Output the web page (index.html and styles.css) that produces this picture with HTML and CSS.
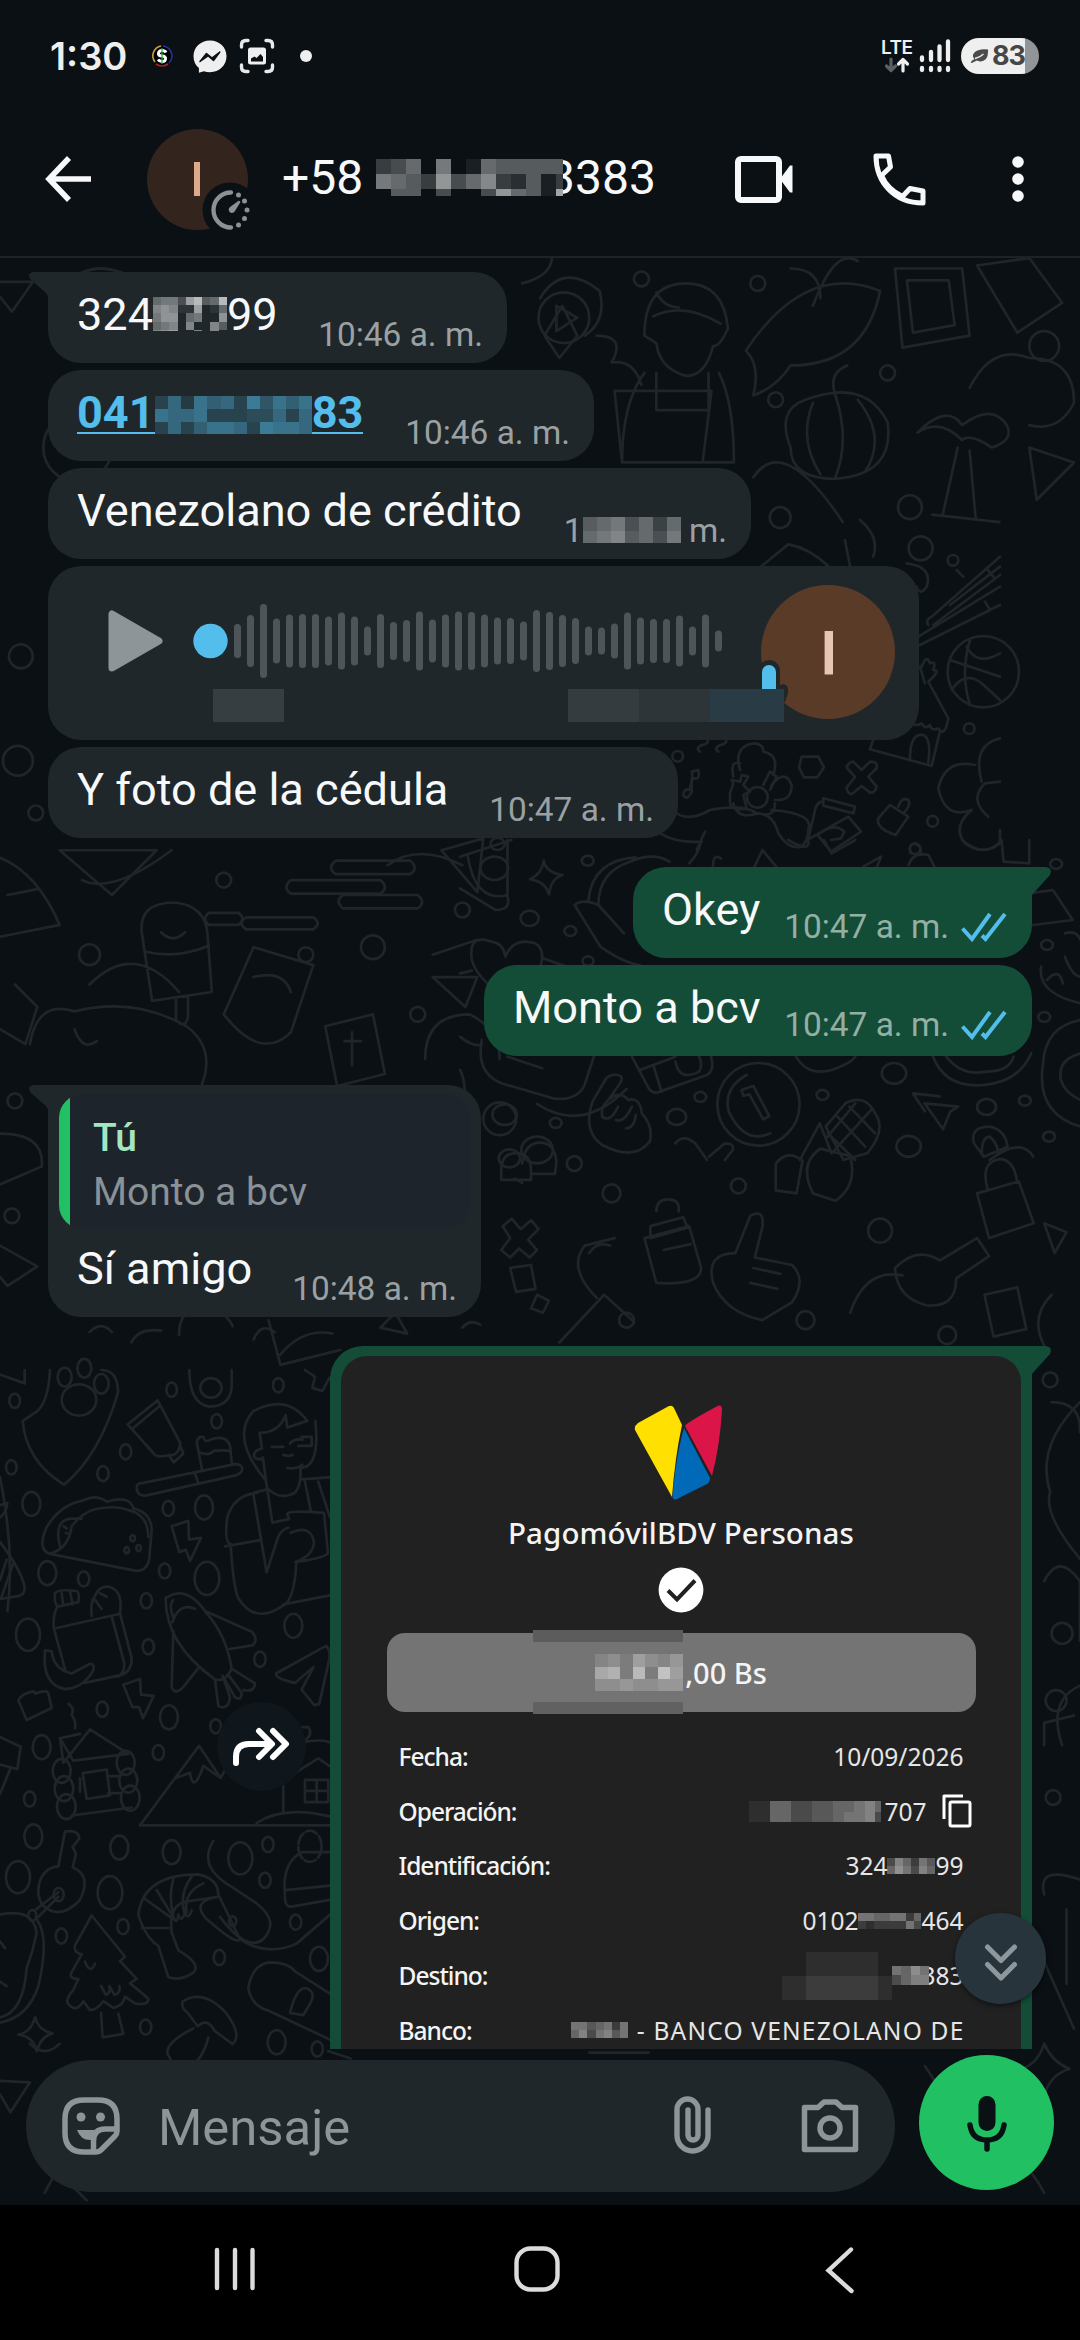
FILE: index.html
```html
<!DOCTYPE html>
<html lang="es">
<head>
<meta charset="utf-8">
<title>Chat</title>
<link rel="stylesheet" href="styles.css">
</head>
<body>
<div class="screen">
  <header class="top">
    <div class="status">
      <span class="clock">1:30</span>
      <svg class="st-coin" width="24" height="24" viewBox="0 0 24 24"><circle cx="12" cy="12" r="9" fill="#000"/><g fill="none" stroke-width="1.6"><path d="M5 18A10 10 0 0 1 11 2" stroke="#c9a03c"/><path d="M13 2A10 10 0 0 1 19 19" stroke="#2a2f9a"/><path d="M18 20A10 10 0 0 1 6 20" stroke="#b02328"/></g><path d="M16 8.500Q15 6.500 12 6.500T8.500 9.200 12 12 15.500 15 12 17.500 8 15.500" fill="none" stroke="#fff" stroke-width="3"/><path d="M12 4v16" stroke="#35a04b" stroke-width="1.300"/></svg>
      <svg class="st-msgr" width="34" height="34" viewBox="0 0 34 34"><path d="M17 .5C7.500.5.5 7.300.5 16.300c0 4.900 2 8.900 5.400 11.700v4.800l5-1.600c2 .7 4 1 6.100 1C26.500 32.200 33.500 25.300 33.500 16.300S26.500.5 17 .5z" fill="#efefef"/><path d="M7 21.500l6.500-8 5.500 4.500 7.800-6-6.300 8.500-5.500-4.700z" fill="#0a1014" stroke="#0a1014" stroke-width="1.500" stroke-linejoin="round"/></svg>
      <svg class="st-shot" width="36" height="36" viewBox="0 0 36 36"><g fill="none" stroke="#e8e8e8" stroke-width="3.400" stroke-linecap="round"><path d="M2.500 9V7q0-4.500 4.500-4.500h2M27 2.500h2q4.500 0 4.500 4.500v2M33.500 27v2q0 4.500-4.500 4.500h-2M9 33.500H7q-4.500 0-4.500-4.500v-2"/></g><rect x="9" y="9.500" width="18" height="17" rx="2.500" fill="#efefef"/><path d="M12 23.500v-3l3.500-2 2 1.500 4-4 2.500 3v4.500z" fill="#0a1014"/></svg>
      <i class="st-dot"></i>
      <span class="grow"></span>
      <span class="net"><b>LTE</b><svg width="28" height="16" viewBox="0 0 28 16" fill="none" stroke-width="3.200" stroke-linecap="round" stroke-linejoin="round"><path d="M7 2v11M2.500 9L7 13.500 11.500 9" stroke="#5b6063"/><path d="M19 14V3M14.500 7L19 2.500 23.500 7" stroke="#efefef"/></svg></span>
      <svg class="signal" width="32" height="34" viewBox="0 0 32 34" stroke="#efefef" stroke-width="4.300" stroke-linecap="round"><path d="M3 18.500V21M12 13v8M20.500 7.500V21M29 2.500V21M3 29v2M12 29v2M20.500 29v2M29 29v2"/></svg>
      <span class="battery"><svg width="19" height="15" viewBox="0 0 19 15"><path d="M18 .5Q8-.5 4 4 1.500 7.500 4.500 10 1 12 .8 13.300q.6 1.500 2.500 0L7 11.500q5 2.500 9-1.500 2.500-3 2-9.500z" fill="#4a4b4c"/><path d="M5 9.500Q10 8.500 13.500 5" stroke="#efefef" stroke-width="1.300" fill="none"/></svg><b>83</b></span>
    </div>
    <div class="bar">
      <svg class="back" width="46" height="46" viewBox="0 0 46 46" fill="none" stroke="#f7f8fa" stroke-width="5.600"><path d="M24 2L4 23l20 21M4 23h42"/></svg>
      <div class="avatar"><i></i><svg class="timer" width="56" height="56" viewBox="0 0 56 56"><circle cx="28" cy="28" r="27.500" fill="#0a1014"/><path d="M29 10.500a17.500 17.500 0 1 0 0 35" fill="none" stroke="#8b9296" stroke-width="4.300" stroke-linecap="round"/><g fill="#8b9296"><circle cx="36.500" cy="13" r="2.500"/><circle cx="42.500" cy="19" r="2.500"/><circle cx="45" cy="28" r="2.500"/><circle cx="42.500" cy="36.500" r="2.500"/><circle cx="36.500" cy="43" r="2.500"/><path d="M37 18.500l1.500 1.500-5.500 9a3.300 3.300 0 1 1-5-4z"/></g></svg></div>
      <div class="phone"><span>+58</span><span class="mosaic m-head" data-cell="15" data-rows="3460701655555|7653946832513|055040049651a"></span><span class="tail-num">3383</span></div>
      <svg class="video" width="60" height="48" viewBox="0 0 60 48"><rect x="4" y="4" width="41" height="41" rx="3" fill="none" stroke="#f7f8fa" stroke-width="6"/><path d="M46 24L56 10.500h2.500v27H56z" fill="#f7f8fa"/></svg>
      <svg class="call" width="54" height="54" viewBox="0 0 54 54" fill="none" stroke="#f7f8fa" stroke-width="5" stroke-linejoin="round"><path d="M4 4h12.500l2 11-9 8.500C13.500 33 21 40 30.500 44.500L38 36.500l13 2.500v12C22 51 4 30 4 4z"/></svg>
      <svg class="dots" width="14" height="48" viewBox="0 0 14 48" fill="#f7f8fa"><circle cx="7" cy="7" r="5.800"/><circle cx="7" cy="24" r="5.800"/><circle cx="7" cy="41" r="5.800"/></svg>
    </div>
  </header>

  <main class="body">
    <svg class="wall" width="1080" height="1947" viewBox="0 258 1080 1947">
      <g transform="translate(0 1370) scale(.3333 .4464)">
        <path d="M0 10l74 20V0M150 0q-5 70-38 92l-44 22q10 90 124 143Q300 190 354 50q0-50-50-50"/>
        <ellipse cx="237" cy="67" rx="52" ry="35"/><circle cx="194" cy="16" r="21"/><circle cx="253" cy="-4" r="21"/><circle cx="304" cy="31" r="22"/>
        <path d="M383 122l90-54 68 96q-5 30-35 27-25 5-40 0zM400 130l80-50M506 190l15 17 29-20-9-17M410 265q-2-12 20-12l275-42q20 0 22 10 0 10-20 15L440 281q-28 2-30-16zM585 232l10 22M606 222l-16-60q5-15 20-12 5 15 25 5 45-10 55 15l6 42M596 184q30 10 45-3 30-2 50 0"/>
        <path d="M795 245Q690 150 760 92q100-40 162 22l-60 15-5-28q-20 40-78 40l7 35q-30 5-22 20 15 8 25 0l12 68q40 30 85 10 20-20 15-55 60 0 45-105M815 172h35M870 165q10-12 38-9M905 150h30v20h-40M850 190q15 5 28 0M862 220q30 2 45-8M905 245l90-5"/>
        <path d="M762 275l40-8 15 75 50-8-5-12q0-8 110-2l12 90q-5 10-95 20-5 90-45 100-80 40-130-20-15-30-22-120-20-3-10-60 20-50 90-55M675 395l106-14M760 278l40 175 35-80q10-15 30-20M872 365q60-20 70 20 0 30-55 45M915 250l18 68M955 250l35 80M850 525l140-20"/>
        <path d="M150 412q-40-10-10-60 40-50 110-60 40-15 70 3 70-15 80 15 55 10 55 50l-6 50q0 40-40 40zM155 410q50-10 60-60 30-30 70-38 60-10 100 2 60 10 60 60M180 395q-20-60 35-62h30M190 350l10 5M198 365l12 3"/><circle cx="398" cy="377" r="7"/><circle cx="380" cy="404" r="7"/><circle cx="416" cy="399" r="7"/>
        <path d="M515 350l50-12 2 42 36-4-33 52-12-25-20 5zM0 385q70 70 74 105 0 15-25 17L0 513M0 470l20-45M5 508l35-75M0 330q20-10 22-32L0 303"/>
        <path d="M165 500q10-10 65-5 10 5 5 25l-62 10q-12-10-8-30zM185 500l5 28M210 495l8 30M172 530q-15 20-10 50l33 90M170 578l190-32q10-50-30-60-30-5-45 20-15 15-10 45M360 545l35 100q0 30-30 38l-110 18M335 552l38 105q0 25-20 30M135 628l20 2q5 40 60 50l55-22q15 0 10 15-30 40-85 42-70-10-60-87zM285 515l20 20M300 500l20 8"/>
        <path d="M500 510q60-30 120 35 60 50 75 125-20 30-50 23-150-80-148-183zM517 565q20-45 68-30M520 555q-15-30 0-40M622 542l135 45q20 20 0 30l-68 8M520 585l-5 125q10 20 35 0l45-42M645 693l10 60q30 10 35-20l-22-48M670 688l35 45q20 10 20-10l-40-40M697 670l68 32q0 20-35 15"/>
        <path d="M828 680l150-62q15 10 10 30l-30 100-15 3-38-35 35-50-55 35q-60-10-57-21zM370 705l50-13 3 35 38 3-32 50-12-25h-20zM55 740q10-15 45-20 10 5 5 5 40-10 40 0l10 32-75 27zM205 748q20 10 10 25 15 15 10 30M180 825l60-10M180 825l10 55 80-75 115 55-165 15zM248 903l72-8 10 58-70 8zM240 915v30M325 910h30M325 948h35M215 998l180-18"/>
        <circle cx="185" cy="898" r="27"/><circle cx="192" cy="938" r="28"/><circle cx="199" cy="978" r="28"/><circle cx="377" cy="880" r="27"/><circle cx="385" cy="920" r="27"/><circle cx="391" cy="959" r="28"/>
        <path d="M0 822l62 22-10 50L0 884M30 895L0 950M420 1020h570M420 1020l177-178 65 72 90-120 60 60M528 914l42-12q10 50 40-15l52 27M850 920v70M770 1015q80-40 220-15M845 800h80q15 15-10 30l-130 75q-10 20 20 25l75-25 75-35 35 18M915 918h70v50h-70zM915 943h70M950 918v50M900 835q70-10 90 0"/>
        <path d="M175 1112l20-78q40-5 43 15l-20 20 10 15-10 30q60 20 20 75-60 45-110 10-20-20-10-50 15-35 57-37zM105 1210l70-40M115 1225l60-45"/><circle cx="176" cy="1175" r="15"/><circle cx="97" cy="1222" r="12"/>
        <path d="M0 1220q100-15 110 40-10 40-30 80-10 100-80 110M110 1230q40 40 5 150-30 70-115 82M0 1280l15 15M0 1370l20 10M275 1222l100 92-15 10 50 40-20 10q50 30 55 35 0 15-40 10l-30-15q-5 20-35 25l-30-15q-20 20-40 20l-20-20q-20 25-40 10-20-10 10-35l15-25q-30 0-20-15l30-40q-25-5-20-20zM303 1440l5 55 62-8-15-45M255 1325q15 30 30 5M303 1380l15 20q15-5 10-20l15 20q20-5 15-20"/>
        <path d="M415 1220q15-90 180-90 60 10 60 45l65 100q-10 15-100-45-50-40 35-50l-90 10q-60 5-50 70l20 40q70 30 45 50-40 20-75 10l-30-70q-40-20-60-70zM435 1185l75 40M425 1250h80M470 1165l45 55M520 1140q-15 40 0 80M575 1135q-40 40-20 85M610 1150q-60 20-50 65M520 1225q10 20 15-5 10 20 20-5 10 20 20-5M640 1055q-50 60 60 105l70 35q70 40 20 80-50 30-130-50"/>
        <circle cx="698" cy="1235" r="11"/><path d="M720 1275q80 40 170 10l100-65M548 1415q60-30 130 25 50 50 20 70l-55-30q-20-30-50-10l-30-30q-20-10-15-25zM625 1495q-15 50-65 72M580 1475q-80 30-78 55l20 30M745 1385q10-50 60-58 60 0 80 20l105 50M745 1385q10 40 60 50l185 65M870 1440q20-60 50-55 30 10 10 35l-20 25zM855 1175q-10-70 50-95h85M855 1165l135-10M855 1180q0 25 20 22l115-15"/><circle cx="930" cy="1067" r="35" stroke-dasharray="12 3"/>
        <path d="M105 1450q10 30 53 36-35 6-48 40-10-33-55-37 38-5 50-39z"/>
        <g class="bub"><circle cx="44" cy="69" r="16"/><circle cx="34" cy="218" r="16"/><circle cx="377" cy="183" r="17"/><circle cx="309" cy="232" r="17"/><circle cx="94" cy="300" r="27"/><circle cx="515" cy="44" r="16"/><circle cx="650" cy="115" r="16"/><circle cx="835" cy="34" r="16"/><circle cx="505" cy="310" r="17"/><circle cx="612" cy="308" r="27"/><circle cx="142" cy="455" r="27"/><circle cx="251" cy="468" r="17"/><circle cx="494" cy="450" r="17"/><circle cx="621" cy="467" r="37"/><circle cx="439" cy="517" r="17"/><circle cx="84" cy="593" r="36"/><circle cx="445" cy="620" r="17"/><circle cx="880" cy="573" r="27"/><circle cx="780" cy="648" r="17"/><circle cx="507" cy="778" r="27"/><circle cx="307" cy="760" r="17"/><circle cx="125" cy="845" r="27"/><circle cx="475" cy="857" r="17"/><circle cx="89" cy="961" r="17"/><circle cx="647" cy="798" r="16"/><circle cx="100" cy="1045" r="27"/><circle cx="358" cy="1070" r="27"/><circle cx="515" cy="1080" r="27"/><circle cx="721" cy="1094" r="36"/><circle cx="54" cy="1136" r="36"/><circle cx="330" cy="1171" r="37"/><circle cx="369" cy="1247" r="17"/><circle cx="184" cy="1268" r="17"/><circle cx="658" cy="1316" r="17"/><circle cx="437" cy="1472" r="17"/><circle cx="830" cy="1506" r="27"/><circle cx="957" cy="1319" r="27"/><circle cx="887" cy="1237" r="17"/><circle cx="804" cy="1063" r="17"/><circle cx="795" cy="1143" r="17"/><circle cx="952" cy="1521" r="17"/></g>
        <ellipse cx="633" cy="40" rx="32" ry="22"/><path d="M568 0q0 75 60 82 60 0 67-42V0M915 0l30 15-8 25 30 7 22-30"/>
      </g>
      <g transform="translate(460 840) scale(.3953 .3333)">
        <path d="M212 62q5 35 48 43-30 10-35 58-10-40-48-45 30-15 35-56zM0 50L130 0M120 0v170q10 40-30 40L0 145M20 50q20 140 100 115M610 0q-5 40-30 70M290 195q20-20 60 0 0-100 80-130 60-30 100 0M325 180q10-120 120-128M290 195l65 125q60 50 100 55M350 195l65 85M30 360q-10-80 50-55 30 5 35 45 20-60 75-40 30 20 10 80l-90 80q-70-60-80-110zM210 355l60 25M0 400l30-8M0 590q30 30 55 25M0 690q10 20 12 60"/>
        <path d="M55 600q-15 100 50 130l130 45q60 10 80-40l25-90M120 650l88 35M435 650l40 90q10 25 30 15l120-50q20-15 10-55M455 690l90-40M490 680l20 75M545 665q10 60 60 30 10-20 0-45"/>
        <ellipse cx="755" cy="793" rx="104" ry="124"/><path d="M725 705q-60 40-45 110 40 100 105 65M712 750l30-12 40 90-15 10-35-75-15 5z"/>
        <path d="M400 705q15 5 5 25l-30 50q30-30 50 0 30-10 35 40 30 40 20 85-40 60-120 10-50-40-25-130l35-70q15-15 30-10zM375 780q-20 20-15 50 20 20 40-30M395 840q20 10 40-40M420 865q20 0 25-40M545 910q20-30 50 0l30 50M630 950l40-40q25 0 20 20l-20 30M860 960l50-110 30 90M925 860l50-70q50-30 75 30 30 50-20 120l-60 20zM930 880l70 80M955 830l70 90M985 800l65 80M1040 810l-100 130M1000 790l-70 100"/>
        <path d="M1175 790l85 10-20 15-18 53zM1300 910q-10-50 40-50 40 10 45 60l-60 30zM1320 940q0-50 20-50 20 20 20 45M1340 960q80-70 110-10M1570 540q-90 20-95 130-20 150 95 190M1570 640q-60 20-50 80 10 40 50 60M1195 645q30 100 130 90 90-10 120-95M1230 650q40 60 100 45 60 0 70-45M850 650q30 60 90 40 50-20 60-40M1440 160l60-10 50 90-100 15M1530 350q20 60 40 60M1470 380q-10 80 100 110M1530 280q30-10 40 20M1485 420q30-40 40 10M745 80l20-50 35 50M1135 75q10-40 50-30l15 35M1140 40q-5-30 10-28 20 5 15 30M1270 0q60 60 100 0l5 65 65 5V0M1020 80l45-30-10 30M640 80q0-40 20-25M830 0q60 40 50 0M920 0l20 40 60-40"/>
        <g class="bub"><circle cx="87" cy="85" r="35"/><circle cx="323" cy="62" r="15"/><circle cx="176" cy="235" r="23"/><circle cx="279" cy="273" r="15"/><circle cx="324" cy="363" r="14"/><circle cx="113" cy="824" r="31"/><circle cx="242" cy="849" r="15"/><circle cx="608" cy="771" r="15"/><circle cx="548" cy="831" r="24"/><circle cx="917" cy="765" r="15"/><circle cx="1098" cy="700" r="31"/><circle cx="1332" cy="801" r="24"/><circle cx="1429" cy="782" r="15"/><circle cx="1490" cy="890" r="15"/><circle cx="1135" cy="919" r="31"/><circle cx="1478" cy="531" r="15"/><circle cx="1485" cy="315" r="15"/><circle cx="1508" cy="72" r="15"/><circle cx="195" cy="930" r="40"/><circle cx="125" cy="955" r="27"/><circle cx="95" cy="12" r="18"/></g>
      </g>
      <g transform="translate(500 550) scale(.3333)">
        <path d="M785 48l80-65q60 10 120 65M1050 48L1035-30M1120 20q20-60-40-110M1220 40q80 10 60 70-20 30-30 0M1285 225q-10-15 10-25L1500 20M1300 225L1500 75M1350 165L1500 50M1260 285L1500 165M1255 260L1500 110M1370 60l20 20M1460 55l20 25M1455 155l15 25"/>
        <circle cx="1450" cy="365" r="107"/><path d="M1350 330l150 50M1410 270q-30 100 0 195M1400 290q30 60 100 20M1355 420q40-60 90-20l55 50"/>
        <path d="M1260 350l15 50M1265 350q15-40 25-10 20-10 10 20 25 0-15 35M1285 395l60 110q-10 60-30 30-20 10-25-10-15 15-25-5-15 10-30 0M1110 598l185 50 25-105M1110 598l10-30M1230 628q0-80 40-73 25 10 15 85"/>
        <path d="M720 660q-20-70 40-80 30 0 30 25 50 10 30 70M700 680q-10-50 20-40M690 730l10-30-5-10 25 5 5-20 20 5-15 25 20 20-20 10 10 40q-50 10-50-20 0-20 0-25zM790 705l20-40 20 15-20 40M815 705q40-50 60 0 0 50-50 45M700 760q10 50 75 30 50 15 50-30M530 790q40 25 100-10 100-20 140 10 50 0 65 60 30 50 70 40 20-20 20-50 20-50-110-60M480 850q50 30 125 25M615 845l-25 55"/><circle cx="772" cy="742" r="31"/>
        <path d="M905 620h50l17 32-20 30h-40l-15-30zM1040 650q10-15 20-15l25 25 25-25q25 0 20 20l-25 25 25 30q-5 20-20 18l-25-20-30 25q-15-5-15-20l25-32-22-25zM970 745l95 25-5 20-90-23zM968 755q-20 0-25 35l-20 85M930 865l115-65 38 45-90 60-40-50q50-40 80-10l-10 20-30 5M1135 805l35-40 55 35-38 55q-60-20-52-50zM1195 770q10-30 30-20 10 15-15 40M1445 695q-30-110 55-130M1415 780q-80 30-100-65 20-90 110-70M1465 800q-60-50-10-100l45-5M1415 780q-60 50-20 100 50 40 105 0v-40"/>
        <path d="M570 715q10-40 5-50l20-5q5 30-10 25l-10 5v35q-15 30-25 10 0-20 20-15M600 605q-15-10 5-20 20 0 20-20M655 605q-15-10 5-20 20 0 20-20"/>
        <g class="bub"><circle cx="533" cy="619" r="16"/><circle cx="1359" cy="31" r="16"/><circle cx="1408" cy="536" r="16"/><circle cx="1298" cy="814" r="16"/><circle cx="1245" cy="896" r="16"/><circle cx="1262" cy="-5" r="36"/></g>
      </g>
      <g transform="scale(1.4917)">
        <path d="M0 189l22 0-14 20-8-10M45 190q20-20 50 0M350 190q20-5 20-18M365 225l12-20 10 20-12 15zM362 200q15-25 40-5 5 20-10 30M400 225q20 0 10 18 15-2 20 15M440 196q5 10 15 10M432 225q0-35 28-35 25 0 28 30-5 12-10 12-5 20-18 20-18-5-20-22zM438 212q20-10 45 5M432 250q-15 20-15 60h75q0-40-10-60M440 250v25h35v-25M412 262h65l-6 48h-54zM500 235q40-60 90-40-10 50-60 50-10 15-25 20 5-20-5-30zM545 205q15-40 30-30M530 180q20 0 20 20M600 180h45l5 45-45 8zM608 188h28l4 30-28 5zM655 178l35-5 22 30-30 20zM530 300q-10-25 10-32 40-15 55 15 5 35-35 38-30 0-30-21zM545 270q-10 25 5 48M560 265q10 30 0 55M575 268q20 25 5 48M560 265q-5-15 8-20M615 290q20-20 30-5 20-15 30 0 5 10-10 15-15-10-20-5-15-15-30-5zM642 300l-10 45M650 302l4 45M625 345l45 5M505 320q20-30 60 30M420 320l-5 30M650 260q15-30 40-20 30 0 30 30-10 20-30 15M690 300l30 10-25 25z"/>
        <circle cx="378" cy="213" r="17"/><path d="M373 205l14 8-14 9z"/>
        <path d="M0 575q25 10 40 45L0 628M5 600l20-4M40 570h65l-30 30zM55 590q20 10 60-20M95 625q-2-20 22-20 20 2 22 20l3 40-40 6zM98 638q20 5 42-4M108 625q8 8 16 0M118 670v14q6 6 8-2v-14M150 680l20-45 40 12-15 45q-20 20-45-12zM165 615h45q6 4 0 8h-45q-6-4 0-8zM195 590h60q6 5 0 9h-60q-6-4 0-9zM140 612h20q5 4 0 8h-20q-5-4 0-8zM225 577h50q6 5 0 9h-50q-6-4 0-9zM230 600h50q6 5 0 9h-50q-6-5 0-9zM296 570l28-8-4 36zM290 640l30-10M290 655h30l-8 20zM218 688l32-8 8 40-32 8zM236 692v22M231 698h11M20 700q5-30 30-22 40-10 75 10 20 15 10 40M50 690q5 15 15 8M285 710q0-30 30-30 20 10 20 30M60 660q30-30 60 5M260 580q20-15 50 0M170 655q20-5 25 10M10 660l15 15-8 25L0 690"/>
        <path d="M337 822l6-5 6 7 7-6 5 6-7 7 6 7-5 5-7-6-6 6-6-5 6-8zM336 785q0-12 10-12t10 12v6h-20zM350 780q2-14 12-14t11 13l-1 8h-15M342 850l14-2 3 16-13 2zM360 868l8 4-4 8-8-3zM432 830l30-8 8 28q0 12-30 10zM436 822l22-6 3 7-25 7zM440 812q0-8 8-8t7 8M445 838l18-4M478 860q-5-20 15-20l10-25q10-5 8 8l-5 20 25 5q10 10 0 25l-20 12q-25-5-33-25zM505 850l18 4M503 860l18 4M545 800q-10-20 5-30l20 5q5 20-10 30zM600 850q15-15 30-5l25-15 8 12-22 15q0 20-20 18-20-5-21-25zM655 800l28-8 10 28-30 10zM662 797q-5-18 8-20 10 0 12 16M700 820l15 6-8 14zM570 880q10-30 35-25M400 870q-20-20-8-35l20-5M375 900l30-32 20 18M395 840q5-8 14-5M660 868l22-5 6 28-22 5zM360 740q30 20 60-10M620 745l-8-12 18 2M520 780q8-10 18-2l-4 22-14-2zM705 868q-15 15-5 34M345 790l5 3"/>
        <path d="M705 940q20 0 19 20M724 940q-30 30-20 60-5 15 20 45M700 1060q10-20 24 0v40M712 1170q-10-30 12-40M700 1270q-5-20 24-10M700 1170v-15l20-5M715 1280v50M700 1315l20 45M0 760q30 0 28 22l-28 12M0 835l25 14L5 862 0 856M0 990q10 50 5 90"/>
        <g class="bub"><circle cx="52" cy="300" r="23"/><circle cx="508" cy="190" r="5"/><circle cx="430" cy="187" r="5"/><circle cx="595" cy="250" r="5"/><circle cx="520" cy="268" r="5"/><circle cx="610" cy="340" r="8"/><circle cx="523" cy="347" r="7"/><circle cx="700" cy="232" r="10"/><circle cx="14" cy="440" r="8"/><circle cx="12" cy="510" r="10"/><circle cx="24" cy="545" r="5"/><circle cx="150" cy="590" r="5"/><circle cx="205" cy="640" r="5"/><circle cx="250" cy="635" r="8"/><circle cx="310" cy="610" r="5"/><circle cx="60" cy="640" r="7"/><circle cx="280" cy="680" r="5"/><circle cx="335" cy="750" r="11"/><circle cx="420" cy="885" r="5"/><circle cx="540" cy="885" r="6"/><circle cx="590" cy="825" r="8"/><circle cx="704" cy="925" r="5"/><circle cx="712" cy="1095" r="7"/><circle cx="708" cy="1140" r="7"/><circle cx="706" cy="1205" r="5"/><circle cx="8" cy="815" r="5"/><circle cx="10" cy="738" r="5"/><circle cx="410" cy="800" r="6"/><circle cx="495" cy="795" r="5"/><circle cx="635" cy="895" r="6"/><circle cx="385" cy="780" r="5"/></g>
        <path d="M20 1370q10 10 20 0M700 1370q5 12 17 17-12 3-17 17-4-12-15-17 11-4 15-17zM670 1440q20 10 30 30M30 1470l8-15 20 20M0 1395l20 1-13 20-7-12M620 1385l20 30M600 1480h30M220 1375l15 5M395 1376h40"/>
        <path d="M120 895q0-18 16-18 14 0 20 12M88 900q5-10 20-8M180 885l8 30 40-10M188 908q15-18 35-14M170 898q5-12 14-5M60 893q8-8 15 0M255 890l10-10 8 14zM310 890q5-6 12-2"/>
      </g>
    </svg>

    <section class="chat">
      <div class="msg in tail w459"><span class="txt">324</span><span class="mosaic m-id" data-cell="8.2" data-rows="56639b45b|787119015|688056008|567070074|789007070"></span><span class="txt">99</span><time>10:46 a. m.</time></div>
      <div class="msg in w546"><span class="txt link">041</span><span class="mosaic m-tel" data-tint="#53bdeb" data-cell="13.100" data-rows="372867395868|877833344737|373688739887"></span><span class="txt link">83</span><time>10:46 a. m.</time></div>
      <div class="msg in w703"><span class="txt">Venezolano de crédito</span><time class="part">1<span class="mosaic m-time" data-cell="14" data-rows="4563525|5674536"></span> m.</time></div>
      <div class="msg in voice">
        <svg class="play" width="55" height="62" viewBox="0 0 55 62"><path d="M4 4v54l47-27z" fill="#8d9598" stroke="#8d9598" stroke-width="7" stroke-linejoin="round"/></svg>
        <div class="track">
          <svg width="530" height="76" viewBox="0 0 530 76"><path stroke="#4d5558" stroke-width="7" stroke-linecap="round" d="M44.500 24.500v27M57.500 15.500v45M70.500 4.500v67M83.500 19v38M96.500 15v46M109.500 14.500v47M122.500 14.500v47M135.500 17v42M148.500 13v50M161.500 17v42M174.500 27v22M187.500 14.500v47M200.500 22.500v31M213.500 20.500v35M226.500 12v52M239.500 20v36M252.500 15v46M265.500 12v52M278.500 12.500v51M291.500 15v46M304.500 18v40M317.500 18.500v39M330.500 22v32M343.500 10.500v55M356.500 12.500v51M369.500 15.500v45M382.500 18.500v39M395.500 27v22M408.500 28v20M421.500 24v28M434.500 13v50M447.500 18v40M460.500 19.500v37M473.500 19.500v37M486.500 16v44M499.500 27v22M512.500 15v46M525.500 31v14"/><circle cx="17.500" cy="38" r="17.200" fill="#53bdeb"/></svg>
          <div class="under"><i class="b1"></i><i class="b2"></i><i class="b3"></i><i class="b4"></i></div>
        </div>
        <div class="vavatar"><svg width="134" height="134" viewBox="0 0 134 134"><circle cx="67" cy="67" r="67" fill="#5a3b28"/><path d="M67.800 46v43.500" stroke="#e7c6b3" stroke-width="8.400"/></svg><svg class="vmic" width="40" height="58" viewBox="0 0 40 58"><path d="M2 30V13a11 11 0 0 1 22 0v14q9-3 8 8l-3 9H2z" fill="#1f272a"/><path d="M6 31V14a7 7 0 0 1 14 0v17z" fill="#53bdeb"/></svg></div>
      </div>
      <div class="msg in w630"><span class="txt">Y foto de la cédula</span><time>10:47 a. m.</time></div>
      <div class="msg out tail w399 first-out"><span class="txt">Okey</span><time>10:47 a. m.</time><svg class="ticks" width="46" height="30" viewBox="0 0 46 30" fill="none" stroke="#53bdeb" stroke-width="4"><path d="M1.500 16.500L11 27 29 2M21 23.500l3.500 3.500L44 2"/></svg></div>
      <div class="msg out w548"><span class="txt">Monto a bcv</span><time>10:47 a. m.</time><svg class="ticks" width="46" height="30" viewBox="0 0 46 30" fill="none" stroke="#53bdeb" stroke-width="4"><path d="M1.500 16.500L11 27 29 2M21 23.500l3.500 3.500L44 2"/></svg></div>
      <div class="reply in tail">
        <div class="quote"><strong>Tú</strong><span>Monto a bcv</span></div>
        <div class="line"><span class="txt">Sí amigo</span><time>10:48 a. m.</time></div>
      </div>
      <div class="photo-row">
        <div class="forward"><svg width="58" height="42" viewBox="0 0 58 42" fill="none" stroke="#fff" stroke-width="6" stroke-linecap="round" stroke-linejoin="round"><path d="M4 37v-6Q4 18 17 18h21M27 5l13 13-13 13M41 5l13 13-13 13"/></svg></div>
        <div class="photo out tail"><div class="receipt">
          <svg class="bdv" width="92" height="96" viewBox="0 0 92 96"><path d="M1 25Q0 21 4 18L34 1.500Q38-.5 40 3l8 17Q41 52 38 92z" fill="#ffe000"/><path d="M50 23L76 73Q76 77 73 79L42 94.500Q38.500 95 38.500 91 42 50 50 23z" fill="#0069b8"/><path d="M51 21Q52 18 84 .8 88-.5 88 5 86 40 78 71z" fill="#dc1548"/></svg>
          <h2>PagomóvilBDV Personas</h2>
          <svg class="ok" width="46" height="46" viewBox="0 0 46 46"><circle cx="23" cy="23" r="22.400" fill="#fff"/><path d="M10 23.500l9 9L37 13.500" fill="none" stroke="#212121" stroke-width="4"/></svg>
          <div class="amount"><i class="cover top-c"></i><i class="cover bot-c"></i><span class="mosaic m-amt" data-cell="12.500" data-rows="2315324|6718195|3343344"></span><span>,00 Bs</span></div>
          <dl>
            <div><dt>Fecha:</dt><dd>10/09/2026</dd></div>
            <div class="op"><dt>Operación:</dt><dd><span class="mosaic m-op" data-cell="10.500" data-rows="11553344556752|11553344566736"></span>707<svg width="30" height="34" viewBox="0 0 30 34" fill="none" stroke="#fff" stroke-width="3" stroke-linejoin="round"><path d="M2 25V2h19"/><rect x="8" y="8" width="20" height="24" rx="1.500"/></svg></dd></div>
            <div><dt>Identificación:</dt><dd>324<span class="mosaic m-ide" data-cell="8" data-rows="375264|586375"></span>99</dd></div>
            <div><dt>Origen:</dt><dd>0102<span class="mosaic m-ori" data-cell="8" data-rows="66556625|21222263"></span>464</dd></div>
            <div><dt>Destino:</dt><dd><span class="mosaic m-des" data-cell="24" data-rows="01110|12221"></span><span class="mosaic m-des2" data-cell="9.300" data-rows="5475|2466"></span>383</dd></div>
            <div><dt>Banco:</dt><dd class="bank"><span class="mosaic m-ban" data-cell="8.200" data-rows="6645626|5736746"></span>- BANCO VENEZOLANO DE</dd></div>
          </dl>
        </div></div>
      </div>
    </section>
    <button class="jump"><svg width="36" height="40" viewBox="0 0 36 40" fill="none" stroke="#8d979c" stroke-width="5" stroke-linecap="round" stroke-linejoin="round"><path d="M4.500 4L18 17.500 31.500 4M4.500 21.500L18 35l13.500-13.500"/></svg></button>

    <footer class="composer">
      <div class="field">
        <svg class="sticker" width="58" height="58" viewBox="0 0 58 58" fill="none" stroke="#8d9598" stroke-width="5.500" stroke-linejoin="round"><path d="M22 3h14Q55 3 55 22v12q0 3-2 5L39 53q-2 2-5 2H22Q3 55 3 36V22Q3 3 22 3z"/><path d="M31.500 55V44q0-12 12-12H55"/><path d="M15 33h18l-3 10q-11 1-15-10z" fill="#8d9598" stroke="none"/><circle cx="19" cy="20" r="4.500" fill="#8d9598" stroke="none"/><circle cx="38.500" cy="20" r="4.500" fill="#8d9598" stroke="none"/></svg>
        <span class="ph">Mensaje</span>
        <svg class="clip" width="38" height="58" viewBox="0 0 38 58" fill="none" stroke="#8d9598" stroke-width="5.400" stroke-linecap="round"><path d="M34 14v25.500a15.500 15.500 0 0 1-31 0V13.500a10.500 10.500 0 0 1 21 0V39a5 5 0 0 1-10 0V14"/></svg>
        <svg class="cam" width="58" height="54" viewBox="0 0 58 54" fill="none" stroke="#8d9598" stroke-width="5.500" stroke-linejoin="round"><path d="M3.500 8.500H17l6-5.500h12l6 5.500h13.500V50.500h-51z"/><circle cx="29" cy="29" r="10"/></svg>
      </div>
      <button class="mic"><svg width="42" height="58" viewBox="0 0 42 58" fill="none" stroke="#0a1014" stroke-width="5.500" stroke-linecap="round"><rect x="12.500" y="2" width="17" height="35" rx="8.500" fill="#0a1014" stroke="none"/><path d="M4 31q2 15 17 15t17-15M21 46v9"/></svg></button>
    </footer>
  </main>
  <nav class="nav">
    <svg width="42" height="46" viewBox="0 0 42 46" stroke="#dcdcdc" stroke-width="4.400" stroke-linecap="round"><path d="M3 4v38M21 4v38M38.500 4v38"/></svg>
    <svg width="46" height="46" viewBox="0 0 46 46" fill="none" stroke="#dcdcdc" stroke-width="4.400"><rect x="2.500" y="2.500" width="41" height="41" rx="14"/></svg>
    <svg width="30" height="48" viewBox="0 0 30 48" fill="none" stroke="#dcdcdc" stroke-width="4.400" stroke-linecap="round"><path d="M26 3.500L3.500 24.500 26.500 45"/></svg>
  </nav>
</div>
<script src="mosaic.js"></script>
</body>
</html>
```

FILE: styles.css
```css
* { box-sizing: border-box; margin: 0; padding: 0; }
body { background: #0a1014; font-family: Roboto, sans-serif; color: #f7f8fa; }
svg { display: block; flex: none; }
button { border: 0; display: flex; align-items: center; justify-content: center; }
.screen { width: 1080px; height: 2340px; display: flex; flex-direction: column; overflow: hidden; }
.grow { flex: 1; }

/* status bar + chat header */
.top { height: 258px; border-bottom: 2px solid #1c2226; display: flex; flex-direction: column; flex: none; }
.status { height: 112px; display: flex; align-items: center; padding: 0 41px 0 50px; }
.clock { font: 600 38px/44px Inter, sans-serif; width: 100px; color: #efefef; }
.st-coin { margin-right: 19px; }
.st-msgr { margin: 2px 12px 0 0; }
.st-shot { margin-right: 25px; }
.st-dot { width: 12px; height: 12px; border-radius: 50%; background: #efefef; }
.net { display: flex; flex-direction: column; width: 36px; height: 34px; color: #efefef; }
.net b { font: 600 19px/17px Inter, sans-serif; letter-spacing: -.5px; }
.net svg { margin: 1px 0 0 3px; }
.signal { margin: 0 10px 0 2px; }
.battery { width: 78px; height: 36px; border-radius: 18px; background: linear-gradient(90deg, #efefef 64px, #929597 64px); display: flex; align-items: center; padding-left: 9px; gap: 3px; color: #454647; }
.battery b { font: 700 27px/36px Inter, sans-serif; letter-spacing: -1px; }
.bar { height: 134px; display: flex; align-items: center; padding-left: 45px; }
.bar > * { flex: none; }
.avatar { width: 101px; height: 101px; margin-left: 56px; border-radius: 50%; background: #33251e; position: relative; display: flex; align-items: center; justify-content: center; padding-right: 2px; }
.avatar i { width: 6px; height: 34px; background: #dfa888; }
.timer { position: absolute; left: 55px; top: 53px; }
.phone { margin-left: 34px; font-size: 48px; line-height: 56px; display: flex; align-items: center; width: 380px; white-space: pre; padding-bottom: 3px; }
.phone > span:first-child { width: 94px; }
.tail-num { margin-left: -15px; }
.mosaic { display: block; overflow: hidden; position: relative; flex: none; }
.m-head { width: 187px; height: 37px; background: #0a1014; z-index: 1; }
.video { margin-left: 72px; }
.call { margin-left: 78px; }
.dots { margin-left: 85px; }

/* conversation */
.body { position: relative; height: 1947px; flex: none; display: flex; flex-direction: column; }
.wall { position: absolute; inset: 0; fill: none; stroke: #1f2529; stroke-width: 2.700px; stroke-linejoin: round; stroke-linecap: round; }
.wall * { vector-effect: non-scaling-stroke; }
.chat { position: relative; height: 1791px; overflow: hidden; padding: 14px 48px 0; display: flex; flex-direction: column; gap: 7px; flex: none; }
.msg { position: relative; height: 91px; flex: none; border-radius: 33px; padding: 17px 24px 0 29px; display: flex; align-items: flex-start; }
.in { background: #1f272a; align-self: flex-start; color: #f7f8fa; }
.out { background: #144d37; align-self: flex-end; }
.in.tail { border-top-left-radius: 0; }
.out.tail { border-top-right-radius: 0; }
.tail::before { content: ""; position: absolute; top: 0; width: 22px; height: 30px; }
.in.tail::before { left: -20px; background: #1f272a; clip-path: path("M6 0H22V30Q21 25 18 21L3 8Q-2 1 6 0z"); }
.out.tail::before { right: -20px; background: #144d37; clip-path: path("M16 0H0V30L20 8Q23 1 16 0z"); }
.txt { font-size: 45.100px; line-height: 52px; white-space: pre; }
.link { color: #53bdeb; font-weight: 700; height: 47px; border-bottom: 2px solid #53bdeb; }
time { margin-left: auto; margin-top: 26px; font-size: 33.400px; line-height: 40px; color: #9ba1a3; white-space: pre; }
.w459 { width: 459px; } .w546 { width: 546px; } .w703 { width: 703px; } .w630 { width: 630px; } .w399 { width: 399px; } .w548 { width: 548px; }
.m-id { width: 74px; height: 34px; margin-top: 8px; }
.m-tel { width: 157px; height: 38px; margin-top: 9px; }
.m-time { width: 98px; height: 26px; display: inline-block; vertical-align: -1px; }
.out.msg { padding: 17px 25px 0 29px; }
.out time { margin-top: 23px; color: #94b0a4; }
.ticks { margin: 28px 0 0 12px; }
.first-out { margin-top: 22px; }
.voice { height: 174px; width: 871px; padding: 0; }
.play { margin: 44px 30px 0 60px; }
.track { width: 530px; margin-top: 37px; flex: none; }
.under { display: flex; margin: 10px 0 0 20px; width: 571px; height: 33px; }
.under i { height: 33px; width: 71px; background: #363e41; }
.under .b2 { margin-left: 284px; background: #343c3f; }
.under .b3 { background: #2e3538; }
.under .b4 { width: 74px; background: #293c46; position: relative; z-index: 2; }
.vavatar { position: relative; margin: 19px 0 0 38px; }
.vmic { position: absolute; left: -5px; top: 73px; }
.reply { position: relative; height: 232px; width: 433px; margin-top: 22px; border-radius: 33px; padding: 9px 11px 0; flex: none; }
.quote { height: 135px; border-radius: 24px; overflow: hidden; background: linear-gradient(90deg, #21c063 11px, #1d242b 11px); padding: 18px 0 0 34px; display: flex; flex-direction: column; font-size: 39px; }
.quote strong { font-weight: 500; color: #a5e6c0; line-height: 53px; }
.quote span { color: #8a9197; line-height: 54px; }
.line { display: flex; padding: 14px 13px 0 18px; }

.photo-row { display: flex; align-items: flex-start; gap: 24px; margin: 22px 0 0 169px; }
.forward { width: 89px; height: 89px; border-radius: 50%; background: #0f171d; margin-top: 356px; display: flex; align-items: center; justify-content: center; flex: none; padding-right: 2px; }
.photo { position: relative; width: 702px; height: 800px; border-radius: 33px; padding: 10px 11px 0; flex: none; }
.receipt { height: 790px; background: #212121; border-radius: 26px 26px 0 0; font-family: "Noto Sans", sans-serif; display: flex; flex-direction: column; align-items: center; color: #f4f4f4; padding-top: 49px; }
.bdv { margin-right: 2px; }
h2 { font-weight: 500; font-size: 29.500px; line-height: 40px; margin-top: 12px; letter-spacing: .1px; white-space: nowrap; }
.ok { margin-top: 14px; }
.amount { position: relative; width: 589px; height: 79px; margin-top: 20px; border-radius: 18px; background: #747474; display: flex; align-items: center; justify-content: center; font-size: 29px; font-weight: 500; }
.m-amt { width: 90px; height: 37px; }
.cover { position: absolute; left: 146px; width: 150px; height: 12px; background: #5c5c5c; }
.top-c { top: -3px; }
.bot-c { bottom: -2px; background: #616161; }
dl { width: 565px; margin-top: 17px; font-size: 24.500px; }
dl div { height: 54.800px; display: flex; align-items: center; justify-content: space-between; }
dt { font-weight: 500; letter-spacing: -1px; }
dd { display: flex; align-items: center; white-space: pre; color: #e6e6e6; }
.bank { letter-spacing: 1.200px; margin-right: -1px; }
.op { margin-right: -8px; }
.op svg { margin-left: 15px; }
.m-op { width: 147px; height: 21px; margin-right: 3px; }
.m-ide { width: 48px; height: 16px; }
.m-ori { width: 63px; height: 16px; }
.m-des { width: 110px; height: 48px; }
.m-des2 { width: 37px; height: 19px; margin-right: -8px; background: #333; }
.m-ban { width: 57px; height: 17px; margin-right: 9px; }
.jump { position: absolute; left: 955px; top: 1655px; width: 91px; height: 91px; border-radius: 50%; background: #28343c; box-shadow: 0 2px 5px rgba(0,0,0,.5); padding-top: 8px; }

/* message field */
.composer { position: relative; height: 156px; display: flex; align-items: flex-start; padding: 6px 26px 0; gap: 24px; }
.field { width: 869px; height: 132px; margin-top: 5px; border-radius: 66px; background: #1f272a; display: flex; align-items: center; padding: 0 36px; }
.ph { font-size: 50.800px; line-height: 58px; color: #8d9598; margin: 4px auto 0 38px; }
.clip { margin-right: 89px; margin-bottom: 2px; }
.sticker { margin-bottom: 1px; }
.mic { width: 135px; height: 135px; border-radius: 50%; background: #21c063; }

.nav { height: 135px; background: #000; display: flex; align-items: flex-start; padding: 41px 0 0 214px; }
.nav svg:nth-child(2) { margin-left: 258px; }
.nav svg:nth-child(3) { margin-left: 265px; }
```

FILE: mosaic.js
```js
// Fills each censored span with translucent square cells; one hex digit per cell gives its strength.
document.querySelectorAll('.mosaic').forEach(function (el) {
  var size = parseFloat(el.dataset.cell);
  var tint = el.dataset.tint || '#ffffff';
  var rows = el.dataset.rows.split('|');
  var ns = 'http://www.w3.org/2000/svg';
  var svg = document.createElementNS(ns, 'svg');
  svg.setAttribute('width', size * rows[0].length);
  svg.setAttribute('height', size * rows.length);
  svg.setAttribute('shape-rendering', 'crispEdges');
  rows.forEach(function (row, y) {
    row.split('').forEach(function (c, x) {
      var r = document.createElementNS(ns, 'rect');
      r.setAttribute('x', x * size);
      r.setAttribute('y', y * size);
      r.setAttribute('width', size);
      r.setAttribute('height', size);
      r.setAttribute('fill', tint);
      r.setAttribute('fill-opacity', parseInt(c, 16) / 16);
      svg.appendChild(r);
    });
  });
  el.appendChild(svg);
});
```
